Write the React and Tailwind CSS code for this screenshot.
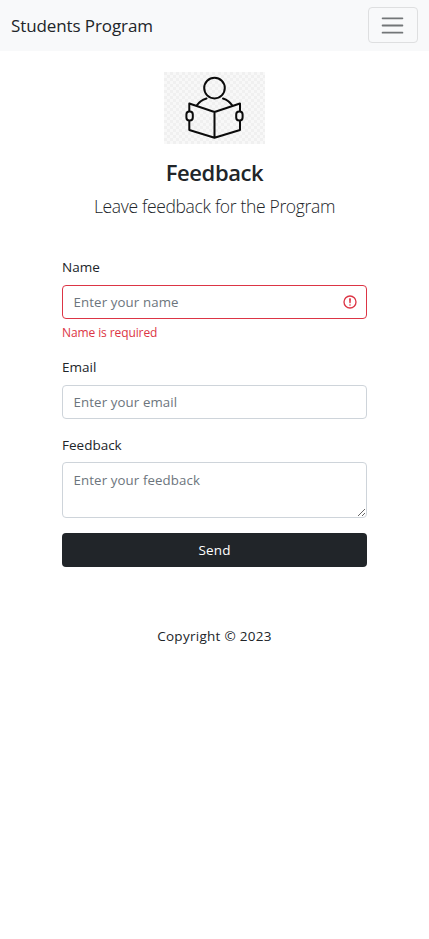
import React from "react";

const control =
  "block w-full rounded-[4px] border bg-white px-[10.5px] text-[13.25px] tracking-[0.12px] text-[#212529] placeholder-[#6c757d] outline-none";

function Navbar() {
  return (
    <nav className="flex h-[51px] items-start justify-between bg-[#f8f9fa] px-[11px] pt-[7px]">
      <a className="pt-[5px] text-[17px] leading-[27px] tracking-[-0.1px] text-[#212529]">Students Program</a>
      <button
        aria-label="Toggle navigation"
        className="flex h-9 w-[50px] items-center justify-center rounded-[4px] border border-[#dedfe0] pt-px pr-[2px]"
      >
        <svg viewBox="0 0 30 30" className="h-[27px] w-[27px]" fill="none" stroke="rgba(33,37,41,0.62)" strokeWidth="2" strokeLinecap="round">
          <path d="M4 7h22M4 15h22M4 23h22" />
        </svg>
      </button>
    </nav>
  );
}

function ReaderPicture() {
  return (
    <svg viewBox="0 0 101 72" className="h-[72px] w-[101px]">
      <defs>
        <pattern id="checks" width="6" height="6" patternUnits="userSpaceOnUse">
          <rect width="6" height="6" fill="#f8f8f8" />
          <path d="M0 0h3v3H0zM3 3h3v3H3z" fill="#f0f0f0" />
        </pattern>
      </defs>
      <rect width="101" height="72" fill="url(#checks)" />
      <g fill="none" stroke="#0b0b0b" strokeWidth="2" strokeLinejoin="round" strokeLinecap="round">
        <circle cx="50.5" cy="16.1" r="10.3" />
        <path d="M32.7 33.5Q36 28.5 42.5 26.5M59 26.5Q65 28.5 68.3 33.5" />
        <path d="M25.3 39V31.5L50.5 40L76 31.5V39M25.3 49.5V58L50.5 65.7L76 58V49.5M50.5 40V65.7" />
        <rect x="22.4" y="39.5" width="6.4" height="9" rx="3" />
        <rect x="72.2" y="39.5" width="6.4" height="9" rx="3" />
      </g>
    </svg>
  );
}

export default function App() {
  return (
    <div className="min-h-[939px] bg-white font-['Open_Sans','Noto_Sans',sans-serif] text-[#212529]">
      <Navbar />
      <main className="flex flex-col items-center pt-[21px]">
        <ReaderPicture />
        <h2 className="mt-[15px] text-[22px] leading-[26px] font-semibold tracking-[-0.4px]">Feedback</h2>
        <p className="mt-[8px] text-[17.5px] leading-[27px] font-light tracking-[-0.33px]">Leave feedback for the Program</p>
        <form className="mt-[37px] w-[305px]">
          <label className="mb-[7px] block text-[13.5px] leading-[21px]">Name</label>
          <div className="relative">
            <input placeholder="Enter your name" className={`${control} h-[34px] border-[#dc3545]`} />
            <svg viewBox="0 0 12 12" className="absolute top-[9px] right-[9px] h-4 w-4" fill="none" stroke="#dc3545">
              <circle cx="6" cy="6" r="4.5" />
              <path strokeLinejoin="round" d="M5.8 3.6h.4L6 6.5z" />
              <circle cx="6" cy="8.2" r=".6" fill="#dc3545" stroke="none" />
            </svg>
          </div>
          <p className="mt-[4px] text-[12px] leading-[19px] tracking-[-0.1px] text-[#dc3545]">Name is required</p>
          <div className="mt-[15px]">
            <label className="mb-[7px] block text-[13.5px] leading-[21px]">Email</label>
            <input placeholder="Enter your email" className={`${control} h-[34px] border-[#ced4da]`} />
          </div>
          <div className="mt-[16px]">
            <label className="mb-[6px] block text-[13.5px] leading-[21px]">Feedback</label>
            <textarea placeholder="Enter your feedback" className={`${control} h-14 resize-y border-[#ced4da] py-[7px] leading-[21px]`} />
          </div>
          <button type="button" className="mt-[15px] block h-[34px] w-full rounded-[4px] bg-[#212529] pt-px text-[13.5px] tracking-[0.15px] text-white">
            Send
          </button>
        </form>
        <footer className="mt-[58px] text-[13.5px] leading-[22px] tracking-[0.28px]">Copyright © 2023</footer>
      </main>
    </div>
  );
}
